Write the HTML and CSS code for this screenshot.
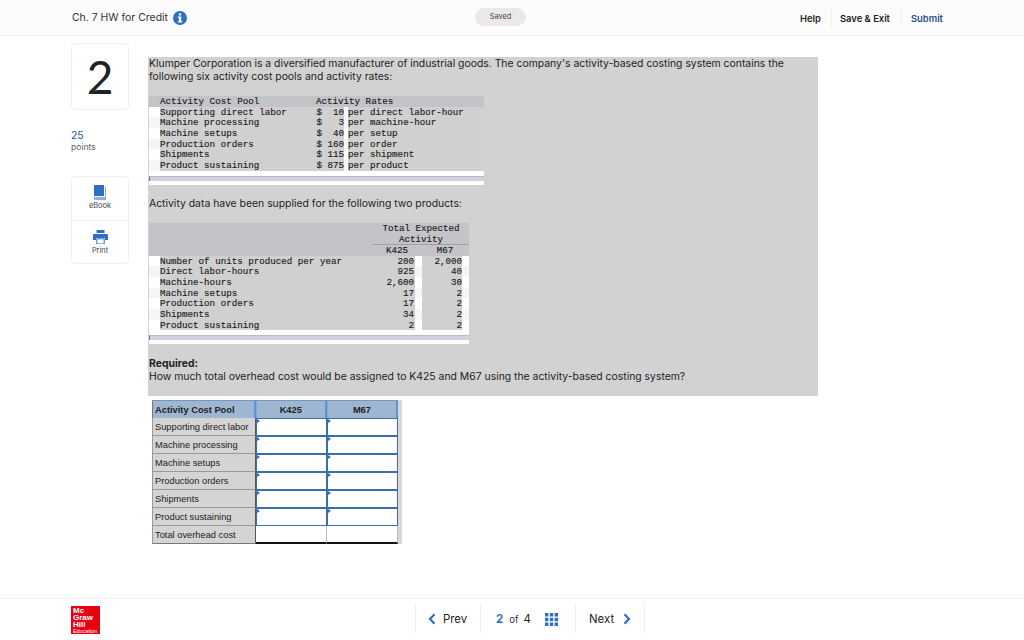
FILE: index.html
```html
<!DOCTYPE html>
<html lang="en">
<head>
<meta charset="utf-8">
<title>Ch. 7 HW for Credit</title>
<link rel="stylesheet" href="styles.css">
</head>
<body>
<div class="page">
  <header class="top">
    <div class="top-title">
      <span>Ch. 7 HW for Credit</span>
      <svg class="info" viewBox="0 0 14 14" width="14" height="14"><circle cx="7" cy="7" r="7" fill="#2f6fc1"/><rect x="5.9" y="2.4" width="2.3" height="2.1" fill="#fff"/><path d="M4.9 5.6h3.3v4.6h1.1v1.4H4.9v-1.4h1v-3.2h-1z" fill="#fff"/></svg>
    </div>
    <div class="saved">Saved</div>
    <nav class="top-links">
      <span class="tl">Help</span>
      <span class="tl tl-mid">Save &amp; Exit</span>
      <span class="tl tl-submit">Submit</span>
    </nav>
  </header>

  <main class="main">
    <aside class="side">
      <div class="qnum">2</div>
      <div class="pts"><div class="pts-n">25</div><div class="pts-l">points</div></div>
      <div class="tools">
        <div class="tool">
          <svg viewBox="0 0 14 15" width="14" height="15"><path d="M1 1.2C1 .5 1.5 0 2.2 0H11v11H2.2C1.5 11 1 11.4 1 12z" fill="#2f6fc1"/><path d="M12 1.5h1V15H2.3C1.5 15 1 14.4 1 13.6V12.6C1 12 1.5 12 2.2 12H12z" fill="#8fb0dc"/></svg>
          <span>eBook</span>
        </div>
        <div class="tool">
          <svg viewBox="0 0 15 14" width="15" height="14"><rect x="3.5" y="0" width="8" height="3" fill="#2f6fc1"/><path d="M1 4h13a1 1 0 0 1 1 1v5h-3V8H3v2H0V5a1 1 0 0 1 1-1z" fill="#2f6fc1"/><path d="M3.8 8.8h7.4V14H3.8z" fill="#fff" stroke="#2f6fc1" stroke-width="1"/></svg>
          <span>Print</span>
        </div>
      </div>
    </aside>

    <section class="content">
      <div class="question">
        <p class="para">Klumper Corporation is a diversified manufacturer of industrial goods. The company's activity-based costing system contains the following six activity cost pools and activity rates:</p>

        <div class="dt dt-one">
          <div class="row1 hd"><span class="c-a">Activity Cost Pool</span><span class="c-b">Activity Rates</span></div>
          <div class="row1"><span class="c-a">Supporting direct labor</span><span class="c-amt">$  10</span><span class="c-b">per direct labor-hour</span></div>
          <div class="row1 z"><span class="c-a">Machine processing</span><span class="c-amt">$   3</span><span class="c-b">per machine-hour</span></div>
          <div class="row1"><span class="c-a">Machine setups</span><span class="c-amt">$  40</span><span class="c-b">per setup</span></div>
          <div class="row1 z"><span class="c-a">Production orders</span><span class="c-amt">$ 160</span><span class="c-b">per order</span></div>
          <div class="row1"><span class="c-a">Shipments</span><span class="c-amt">$ 115</span><span class="c-b">per shipment</span></div>
          <div class="row1 z"><span class="c-a">Product sustaining</span><span class="c-amt">$ 875</span><span class="c-b">per product</span></div>
          <div class="rule"></div>
        </div>

        <p class="para">Activity data have been supplied for the following two products:</p>

        <div class="dt dt-two">
          <div class="hd2">
            <div class="hd2-top">Total Expected<br>Activity</div>
            <div class="hd2-cols"><span>K425</span><span>M67</span></div>
          </div>
          <div class="row2"><span class="l">Number of units produced per year</span><span class="n">200</span><span class="n">2,000</span></div>
          <div class="row2 z"><span class="l">Direct labor-hours</span><span class="n">925</span><span class="n">40</span></div>
          <div class="row2"><span class="l">Machine-hours</span><span class="n">2,600</span><span class="n">30</span></div>
          <div class="row2 z"><span class="l">Machine setups</span><span class="n">17</span><span class="n">2</span></div>
          <div class="row2"><span class="l">Production orders</span><span class="n">17</span><span class="n">2</span></div>
          <div class="row2 z"><span class="l">Shipments</span><span class="n">34</span><span class="n">2</span></div>
          <div class="row2"><span class="l">Product sustaining</span><span class="n">2</span><span class="n">2</span></div>
          <div class="rule"></div>
        </div>

        <p class="para"><b>Required:</b><br>How much total overhead cost would be assigned to K425 and M67 using the activity-based costing system?</p>
      </div>

      <div class="answer-wrap">
        <table class="answer">
          <thead><tr><th class="th-l">Activity Cost Pool</th><th>K425</th><th>M67</th></tr></thead>
          <tbody>
            <tr><td class="lab">Supporting direct labor</td><td class="inp"></td><td class="inp"></td></tr>
            <tr><td class="lab">Machine processing</td><td class="inp"></td><td class="inp"></td></tr>
            <tr><td class="lab">Machine setups</td><td class="inp"></td><td class="inp"></td></tr>
            <tr><td class="lab">Production orders</td><td class="inp"></td><td class="inp"></td></tr>
            <tr><td class="lab">Shipments</td><td class="inp"></td><td class="inp"></td></tr>
            <tr><td class="lab">Product sustaining</td><td class="inp"></td><td class="inp"></td></tr>
            <tr class="total"><td class="lab">Total overhead cost</td><td class="sum"></td><td class="sum"></td></tr>
          </tbody>
        </table>
      </div>
    </section>
  </main>

  <footer class="foot">
    <div class="logo"><span>Mc</span><span>Graw</span><span>Hill</span><span class="edu">Education</span></div>
    <div class="pager">
      <div class="pg pg-prev"><svg viewBox="0 0 8 12" width="8" height="12"><path d="M6.5 1.2 2 6l4.5 4.8" fill="none" stroke="#2f6fc1" stroke-width="2.2"/></svg><span>Prev</span></div>
      <div class="pg pg-mid"><b>2</b><small>of</small><span>4</span>
        <svg class="grid" viewBox="0 0 13 13" width="13" height="13"><path d="M0 0h3.4v3.4H0zM4.8 0h3.4v3.4H4.8zM9.6 0H13v3.4H9.6zM0 4.8h3.4v3.4H0zM4.8 4.8h3.4v3.4H4.8zM9.6 4.8H13v3.4H9.6zM0 9.6h3.4V13H0zM4.8 9.6h3.4V13H4.8zM9.6 9.6H13V13H9.6z" fill="#2f6fc1"/></svg>
      </div>
      <div class="pg pg-next"><span>Next</span><svg viewBox="0 0 8 12" width="8" height="12"><path d="M1.5 1.2 6 6l-4.5 4.8" fill="none" stroke="#2f6fc1" stroke-width="2.2"/></svg></div>
    </div>
  </footer>
</div>
</body>
</html>
```

FILE: styles.css
```css
* { box-sizing: border-box; }
html, body { margin: 0; padding: 0; }
body { font-family: Inter, "Liberation Sans", sans-serif; color: #222; background: #fff; }
.page { width: 1024px; height: 640px; display: flex; flex-direction: column; overflow: hidden; }

.top { height: 36px; flex: none; display: flex; align-items: center; padding: 0 0 0 72px; background: #fcfcfc; border-bottom: 1px solid #f0f0f0; }
.top-title { width: 403px; display: flex; align-items: center; gap: 5px; font-size: 10.45px; color: #333; }
.info { display: block; }
.saved { width: 51px; height: 18px; margin-top: -2px; border-radius: 9px; background: #ece8ea; color: #444; font-size: 7.4px; line-height: 18px; text-align: center; }
.top-links { margin-left: 274px; display: flex; align-items: center; height: 20px; font-size: 9.4px; font-weight: 600; color: #222; padding-top: 1px; }
.tl { width: 31px; }
.tl-mid { width: 71px; padding-left: 8px; padding-top: 1px; border-left: 1px solid #f0f0f0; border-right: 1px solid #f0f0f0; line-height: 19px; }
.tl-submit { padding-left: 9px; color: #1d4f91; width: 50px; }

.main { flex: 1; display: flex; padding: 7px 0 0 71px; min-height: 0; }
.side { width: 58px; flex: none; margin-right: 19px; }
.qnum { height: 67px; border: 1px solid #f0f0f0; border-radius: 4px; font-family: Lato, sans-serif; font-size: 46px; line-height: 65px; text-align: center; color: #222; font-weight: 400; }
.pts { margin-top: 19px; }
.pts-n { font-size: 10.4px; line-height: 13px; color: #1d4f91; }
.pts-l { font-size: 8.6px; line-height: 10px; color: #666; }
.tools { margin-top: 24px; border: 1px solid #f0f0f0; border-radius: 4px; }
.tool { height: 43px; display: flex; flex-direction: column; align-items: center; padding-top: 8px; font-size: 7.4px; line-height: 11px; color: #444; }
.tool + .tool { border-top: 1px solid #f0f0f0; padding-top: 9px; }
.tool + .tool span { margin-top: 1px; }

.content { padding-top: 14px; flex: none; width: 670px; }
.question { background: #d2d2d2; padding: 0 0 0 1px; height: 339px; overflow: hidden; }
.para { margin: 0 25px 13px 0; font-size: 10.4px; line-height: 13px; color: #222; }
.para b { font-weight: 700; }

.dt { font-family: "Liberation Mono", "DejaVu Sans Mono", monospace; font-size: 9.2px; line-height: 12.6px; color: #1c1c1c; -webkit-text-stroke: .15px #1c1c1c; margin-bottom: 13px; background: #fff; }
.dt span { white-space: pre; position: relative; }
.dt-one { width: 335px; margin-bottom: 12px; }
.dt-two { width: 320px; }

.row1, .row2 { --base: #fff; --cell: #d0d0d0; display: flex; height: 10.67px; padding-left: 11px; }
.row1.z, .row2.z { --base: #f5f5f5; }
.row1 { background: linear-gradient(to right, var(--base) 11px, var(--cell) 11px 195px, var(--base) 195px 199px, var(--cell) 199px); }
.row1 .c-a { width: 156px; }
.row1 .c-amt { width: 28px; flex: none; text-align: right; margin-right: 4px; }
.row1 .c-b { flex: 1; }
.row1.hd { background: #c3c4c7; }

.rule { height: 14px; background: #fff; padding-top: 5px; }
.rule::before { content: ""; display: block; height: 4px; background: #cfd2e0; border-top: 1px solid #b9bbc6; border-left: 1px solid #777; }

.hd2 { background: #c3c4c7; height: 33px; padding-left: 224px; text-align: center; padding-top: 1.5px; }
.hd2-top { border-bottom: 1px solid #a0a1a5; height: 21px; line-height: 10.67px; }
.hd2-cols { display: flex; height: 10px; line-height: 11px; }
.hd2-cols span { width: 48px; }
.row2 { background: linear-gradient(to right, var(--base) 11px, var(--cell) 11px 266px, var(--base) 266px 273px, var(--cell) 273px 313px, var(--base) 313px); }
.row2 .l { width: 215px; }
.row2 .n { text-align: right; }
.row2 .n:nth-child(2) { width: 40px; padding-right: 1px; margin-right: 7px; }
.row2 .n:nth-child(3) { width: 40px; }

.answer-wrap { margin: 4px 0 0 4px; width: 250px; background: #d8d8d8; padding-right: 4px; }
.answer { border-collapse: separate; border-spacing: 0; table-layout: fixed; width: 246px; font-family: "Liberation Sans", Arial, sans-serif; font-size: 9.3px; color: #222; background: #fff; }
.answer th, .answer td { padding: 0 2px; height: 18px; }
.answer th { width: 71px; background: #9fb6d2; font-weight: 700; text-align: center; border-right: 2px solid #5f95d4; border-left: 1px solid #7ea6d6; border-top: 1px solid #7896bd; height: 18px; }
.answer th.th-l { width: 103.5px; text-align: left; border-left: 1px solid #777; }
.answer td.lab { background: #d4d4d4; border: 1px solid #999; border-top: 0; border-right: 1px solid #555; white-space: nowrap; }
.answer td.inp { position: relative; background: #fff; border: 1px solid #3a6ead; border-width: 1px 1px 1.5px 1.5px; }
.answer td.inp::before { content: ""; position: absolute; left: 0; top: 0; border-left: 3px solid #2f6fc1; border-top: 2px solid transparent; border-bottom: 2px solid transparent; }
.answer td.sum { background: #fff; border-right: 1px solid #bbb; border-bottom: 2px solid #111; }
.total td.lab { border-bottom: 1px solid #777; }

.foot { height: 42px; flex: none; display: flex; border-top: 1px solid #f0f0f0; padding: 7px 0 0 71px; }
.logo { width: 29px; height: 28px; background: #e60012; color: #fff; font-family: "Liberation Sans", Arial, sans-serif; font-weight: 700; font-size: 8px; line-height: 7px; padding: 1px 0 0 2px; display: flex; flex-direction: column; }
.logo .edu { font-size: 5.4px; font-weight: 400; line-height: 6px; }
.pager { margin-left: 315px; margin-top: -3px; display: flex; height: 30px; font-size: 11.4px; color: #222; }
.pg { display: flex; align-items: center; padding-top: 2px; border-left: 1px solid #f0f0f0; }
.pg-prev { width: 65px; padding-left: 12px; gap: 7px; }
.pg-mid { width: 95px; padding-left: 15px; }
.pg-mid b { color: #2f6fc1; font-weight: 700; }
.pg-mid small { font-size: 9.6px; margin: 0 5px 0 6px; color: #333; }
.grid { margin-left: 14px; }
.pg-next { width: 70px; padding-left: 13px; gap: 9px; border-right: 1px solid #f0f0f0; }
```
